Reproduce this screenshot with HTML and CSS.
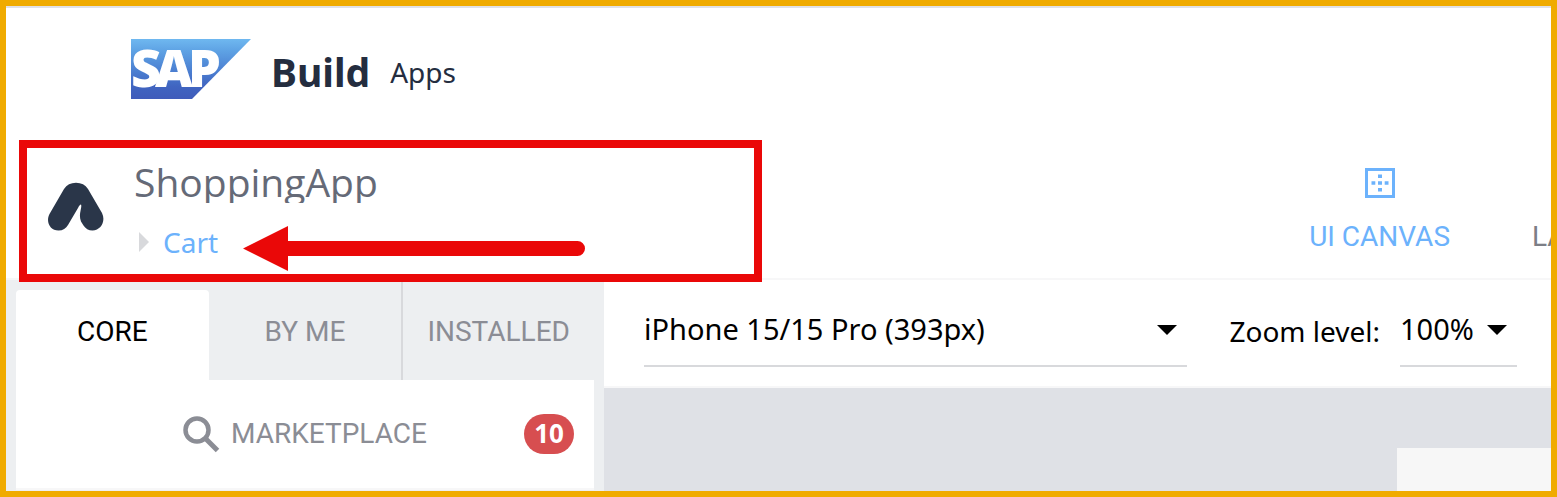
FILE: index.html
```html
<!DOCTYPE html>
<html lang="en">
<head>
<meta charset="utf-8">
<meta name="viewport" content="width=device-width, initial-scale=1">
<title>SAP Build Apps</title>
<link rel="stylesheet" href="styles.css">
</head>
<body>
<div class="app">
  <header class="brand">
    <svg class="brand-logo" viewBox="0 0 120 60" role="img" aria-label="SAP">
      <defs>
        <linearGradient id="sap-blue" x1="0" y1="0" x2="0" y2="1">
          <stop offset="0" stop-color="#6fb8f0"/>
          <stop offset="0.2" stop-color="#5ea2e4"/>
          <stop offset="0.55" stop-color="#4a7dd0"/>
          <stop offset="0.8" stop-color="#4064c0"/>
          <stop offset="1" stop-color="#405cba"/>
        </linearGradient>
      </defs>
      <path d="M0 0H120L61 60H0Z" fill="url(#sap-blue)"/>
      <text class="brand-letters" y="48" x="0 24 57">SAP</text>
    </svg>
    <h1 class="brand-name">Build</h1>
    <span class="brand-product">Apps</span>
  </header>

  <div class="project">
    <svg class="project-icon" viewBox="48 182 56 49" aria-hidden="true">
      <path d="M64 189Q68 182.7 76 182.7Q84 182.7 88 189L102 213C106 221 101 230.5 92.5 230.5C88.500 230.5 85.500 228.500 83.500 225.500L81 221.500C79.500 218 79.800 214 80.500 211C81 208 81.700 206 81 204.500C80 204.500 79 206 78 208L68 225C66 228.500 63 230.5 58.500 230.5C50 230.500 45.500 222 49.500 214Z" fill="#2a3649"/>
    </svg>
    <div class="project-text">
      <h2 class="project-name">ShoppingApp</h2>
      <div class="crumb">
        <svg class="crumb-mark" viewBox="0 0 10 20" aria-hidden="true"><path d="M0 0L10 10L0 20Z" fill="#d8d9dc"/></svg>
        <a class="crumb-link" href="#cart">Cart</a>
      </div>
    </div>
    <nav class="views">
      <a class="view view-active" href="#canvas">
        <svg class="view-icon" viewBox="0 0 30 30" aria-hidden="true">
          <path d="M1.500 1.500H28.500V28.500H1.500Z" fill="none" stroke="#6cb2fc" stroke-width="3"/>
          <path d="M13 6.500h4v3.500h-4zM13 13.300h4v3.400h-4zM13 20h4v3.500h-4zM6.500 13.300h3.800v3.400h-3.800zM19.700 13.300h3.800v3.400h-3.800z" fill="#6cb2fc"/>
        </svg>
        <span>UI CANVAS</span>
      </a>
      <a class="view view-cut" href="#la"><span>LA</span></a>
    </nav>
    <div class="callout">
      <svg class="callout-arrow" viewBox="0 0 342 45" aria-hidden="true"><path d="M0 22.500L45 0V15H334.500A7.500 7.500 0 0 1 334.500 30H45V45Z" fill="#ea0808"/></svg>
    </div>
  </div>

  <main class="workspace">
    <aside class="library">
      <div class="tabs" role="tablist">
        <button class="tab tab-active" role="tab" aria-selected="true">CORE</button>
        <button class="tab" role="tab" aria-selected="false">BY ME</button>
        <button class="tab" role="tab" aria-selected="false">INSTALLED</button>
      </div>
      <div class="market">
        <button class="market-button">
          <svg class="market-icon" viewBox="0 0 37 37" aria-hidden="true"><circle cx="14" cy="14" r="11.500" fill="none" stroke="#8b8d95" stroke-width="4.500"/><path d="M22 22L34.500 34.500" stroke="#8b8d95" stroke-width="5"/></svg>
          <span>MARKETPLACE</span>
        </button>
        <span class="badge">10</span>
      </div>
    </aside>
    <section class="stage">
      <div class="toolbar">
        <div class="picker picker-device">
          <select class="picker-select" aria-label="Device"><option>iPhone 15/15 Pro (393px)</option></select>
          <svg class="picker-arrow" viewBox="0 0 20 10" aria-hidden="true"><path d="M0 0H20L10 10Z"/></svg>
        </div>
        <label class="zoom-label" for="zoom">Zoom level:</label>
        <div class="picker picker-zoom">
          <select class="picker-select" id="zoom"><option>100%</option></select>
          <svg class="picker-arrow" viewBox="0 0 20 10" aria-hidden="true"><path d="M0 0H20L10 10Z"/></svg>
        </div>
      </div>
      <div class="canvas"><div class="preview"></div></div>
    </section>
  </main>
</div>
</body>
</html>
```
FILE: styles.css
```css
* { box-sizing: border-box; }

body {
  margin: 0;
  font-family: "Noto Sans", sans-serif;
  font-size: 28px;
  line-height: 36px;
  color: #000;
  background: #fff;
}

h1, h2 { margin: 0; font-weight: 400; }
a { color: inherit; text-decoration: none; }
button, select { font: inherit; color: inherit; background: none; border: 0; margin: 0; padding: 0; }
svg { display: block; flex: none; }

.app {
  display: flex;
  flex-direction: column;
  height: 100vh;
  overflow: hidden;
  border: 6px solid #f0ab00;
}

.brand {
  display: flex;
  align-items: center;
  flex: none;
  height: 134px;
  padding: 0 125px 4px;
  border-top: 2px solid #e1e1e4;
  color: #242d3f;
}
.brand-logo { width: 120px; height: 60px; margin-bottom: 6px; }
.brand-letters { font-family: "Open Sans", sans-serif; font-weight: 800; font-size: 52px; fill: #fff; }
.brand-name { margin-left: 20px; font-size: 39px; font-weight: 700; }
.brand-product { margin-left: 20px; }

.project {
  position: relative;
  display: flex;
  align-items: flex-start;
  flex: none;
  height: 140px;
  padding-left: 42px;
  border-bottom: 2px solid #f7f7f8;
}
.project-icon { width: 56px; height: 49px; margin-top: 42px; }
.project-text { margin: 22px 0 0 30px; }
.project-name { height: 41px; overflow: hidden; font-family: "Open Sans", sans-serif; font-size: 39px; line-height: 40px; color: #656a77; }
.crumb { display: flex; align-items: center; gap: 14px; margin: 21px 0 0 5px; }
.crumb-mark { width: 10px; height: 20px; }
.crumb-link { color: #6cb2fc; }

.views {
  display: flex;
  gap: 82px;
  margin-left: auto;
  padding-top: 28px;
  font-family: Roboto, sans-serif;
  color: #7c7e86;
}
.view { display: flex; flex-direction: column; align-items: center; gap: 21px; }
.view-active { color: #6cb2fc; }
.view-icon { width: 30px; height: 30px; }
.view-cut { width: 19px; overflow: hidden; align-items: flex-start; padding-top: 51px; }

.callout { position: absolute; left: 13px; top: 0; width: 743px; height: 142px; border: 8px solid #ea0808; pointer-events: none; }
.callout-arrow { position: absolute; left: 216px; top: 78px; width: 342px; height: 45px; }

.workspace { display: flex; flex: 1; min-height: 0; }

.library {
  display: flex;
  flex-direction: column;
  flex: none;
  width: 598px;
  padding: 0 10px 1px;
  background: #edeff1;
  font-family: Roboto, sans-serif;
  color: #8b8d95;
}
.tabs { display: grid; grid-template-columns: repeat(3, 1fr); height: 100px; }
.tab { padding-top: 4px; }
.tab + .tab + .tab { border-left: 2px solid #d8d9dc; }
.tab-active { margin-top: 10px; padding-top: 0; padding-bottom: 6px; border-radius: 4px 4px 0 0; background: #fff; color: #000; }
.market { display: flex; align-items: center; flex: 1; padding: 0 20px 0 167px; border-bottom: 2px solid #f7f7f8; background: #fff; }
.market-button { display: flex; align-items: center; gap: 11px; }
.market-icon { width: 37px; height: 37px; }
.badge { margin-left: auto; padding: 1px 10px 3px; border-radius: 20px; background: #d74e50; color: #fff; font-family: "Noto Sans", sans-serif; font-weight: 700; font-size: 26px; }

.stage { display: flex; flex-direction: column; flex: 1; min-width: 0; }
.toolbar { display: flex; align-items: center; flex: none; height: 108px; padding: 0 34px 4px 40px; border-bottom: 2px solid #f7f7f8; }
.picker { position: relative; display: flex; align-items: center; border-bottom: 2px solid #d8d9dc; }
.picker-device { flex: 1; }
.picker-zoom { width: 117px; }
.picker-select { appearance: none; width: 100%; height: 70px; padding-bottom: 2px; padding-right: 40px; outline: 0; font-size: 29px; }
.picker-zoom .picker-select { padding-right: 30px; }
.picker-arrow { position: absolute; right: 10px; width: 20px; height: 10px; pointer-events: none; }
.zoom-label { margin: 0 20px 0 42px; }
.canvas { display: flex; justify-content: flex-end; flex: 1; padding-top: 60px; background: #dfe1e6; }
.preview { width: 154px; background: #f7f7f7; }
```
